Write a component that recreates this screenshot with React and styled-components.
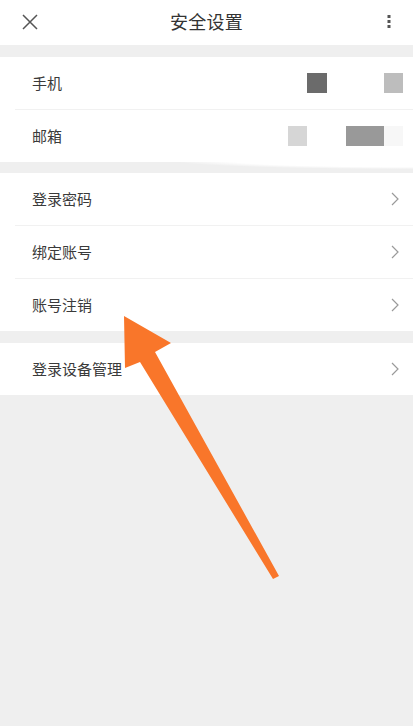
import React from 'react';
import styled, { createGlobalStyle } from 'styled-components';

const GlobalStyle = createGlobalStyle`
    html, body {
        margin: 0;
        padding: 0;
        background: #efefef;
    }
    body {
        font-family: "Noto Sans CJK SC", "Noto Sans", sans-serif;
        color: #333;
    }
`;

const Page = styled.div`
    position: relative;
    width: 413px;
    min-height: 726px;
    background: #efefef;
    overflow: hidden;
`;

const Header = styled.header`
    height: 45px;
    background: #fff;
    display: grid;
    grid-template-columns: 1fr auto 1fr;
    align-items: center;
    padding: 0 22px 0 22px;
    box-sizing: border-box;
    margin-bottom: 12px;
`;

const Title = styled.h1`
    margin: 0 0 3px;
    font-size: 18px;
    font-weight: 400;
    line-height: 1;
    color: #333;
    letter-spacing: 0.3px;
`;

const IconBtn = styled.div`
    display: flex;
    align-items: center;
    justify-content: ${p => (p.$right ? 'flex-end' : 'flex-start')};
    margin-bottom: 2px;
`;

const Section = styled.section`
    position: relative;
    background: #fff;
    margin-bottom: ${p => p.$gap || 0}px;

    /* smudge of white bleeding into the gap below */
    ${p => p.$smear && `
        &::after {
            content: '';
            position: absolute;
            right: 0;
            bottom: -7px;
            width: 240px;
            height: 9px;
            background: radial-gradient(ellipse at 100% 0%, #fff 55%, rgba(255,255,255,0) 72%);
        }
    `}
`;

const Row = styled.div`
    height: 53px;
    box-sizing: border-box;
    margin-left: 15px;
    padding: 0 10px 0 17px;
    display: flex;
    align-items: center;
    border-bottom: 1px solid #f1f1f1;

    &:last-child {
        border-bottom: none;
        height: 52px;
    }
`;

const Label = styled.span`
    flex: 1;
    font-size: 15px;
    line-height: 1;
    color: #3a3a3a;
    margin-bottom: 2px;
`;

const Masks = styled.div`
    display: flex;
    align-items: center;
`;

const Mask = styled.div`
    width: ${p => p.$w}px;
    height: 20px;
    margin-left: ${p => p.$ml || 0}px;
    background: ${p => p.$c};
`;

const Chevron = styled.svg`
    width: 8px;
    height: 14px;
    margin-right: 4px;
`;

const ArrowLayer = styled.svg`
    position: absolute;
    left: 0;
    top: 0;
    width: 413px;
    height: 726px;
    pointer-events: none;
`;

const CloseIcon = () => (
    <svg width="16" height="16" viewBox="0 0 16 16">
        <path d="M1 1 L15 15 M15 1 L1 15" stroke="#555" strokeWidth="1.5" fill="none" />
    </svg>
);

const MoreIcon = () => (
    <svg width="4" height="14" viewBox="0 0 4 14">
        <rect x="0.5" y="0" width="3" height="3" fill="#555" />
        <rect x="0.5" y="5" width="3" height="3" fill="#555" />
        <rect x="0.5" y="10" width="3" height="3" fill="#555" />
    </svg>
);

const Arrow = () => (
    <Chevron viewBox="0 0 8 14">
        <polyline points="1,1 7,7 1,13" fill="none" stroke="#9a9a9a" strokeWidth="1.2" />
    </Chevron>
);

const LinkRow = ({ label }) => (
    <Row>
        <Label>{label}</Label>
        <Arrow />
    </Row>
);

const App = () => {
    return (
        <Page>
            <GlobalStyle />
            <Header>
                <IconBtn><CloseIcon /></IconBtn>
                <Title>安全设置</Title>
                <IconBtn $right><MoreIcon /></IconBtn>
            </Header>

            <Section $gap={11} $smear>
                <Row>
                    <Label>手机</Label>
                    <Masks>
                        <Mask $w={20} $c="#6b6b6b" />
                        <Mask $w={19} $ml={57} $c="#bdbdbd" />
                    </Masks>
                </Row>
                <Row>
                    <Label>邮箱</Label>
                    <Masks>
                        <Mask $w={19} $c="#d6d6d6" />
                        <Mask $w={38} $ml={39} $c="#999999" />
                        <Mask $w={19} $c="#f7f7f7" />
                    </Masks>
                </Row>
            </Section>

            <Section $gap={12}>
                <LinkRow label="登录密码" />
                <LinkRow label="绑定账号" />
                <LinkRow label="账号注销" />
            </Section>

            <Section>
                <LinkRow label="登录设备管理" />
            </Section>

            <ArrowLayer viewBox="0 0 413 726">
                <polygon
                    points="124,316 171,343 155,352 279,576 273,579 140,362 125,368"
                    fill="#f9762a"
                />
            </ArrowLayer>
        </Page>
    );
};

export default App;
